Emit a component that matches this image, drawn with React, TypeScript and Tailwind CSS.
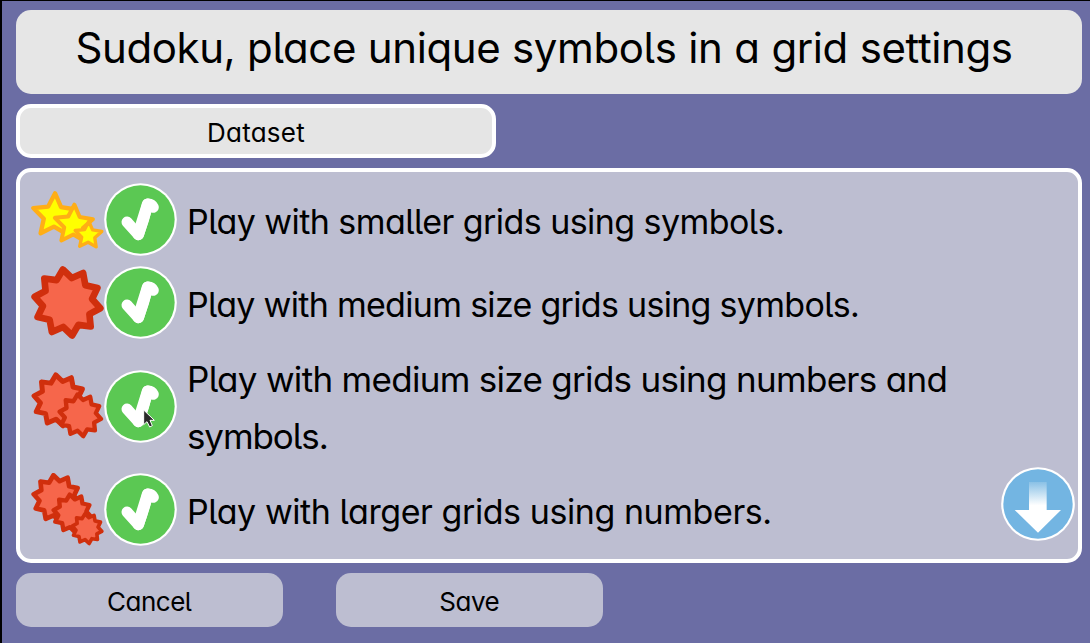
import React from "react";

function starPoints(cx: number, cy: number, outer: number, inner: number, tips: number, rotation: number) {
  const points: string[] = [];
  for (let i = 0; i < tips * 2; i++) {
    const r = i % 2 === 0 ? outer : inner;
    const a = ((rotation - 90 + (i * 180) / tips) * Math.PI) / 180;
    points.push(`${(cx + r * Math.cos(a)).toFixed(1)},${(cy + r * Math.sin(a)).toFixed(1)}`);
  }
  return points.join(" ");
}

type Shape = { cx: number; cy: number; r: number; stroke: number };

function Stars({ shapes }: { shapes: Shape[] }) {
  return (
    <svg viewBox="33 20 219 219" className="size-[73px] shrink-0">
      {shapes.map((s, i) => (
        <polygon key={i} points={starPoints(s.cx, s.cy, s.r, s.r * 0.49, 5, 2)} fill="#ffff00" stroke="#ffae16" strokeWidth={s.stroke} strokeLinejoin="round" />
      ))}
    </svg>
  );
}

function Bursts({ shapes }: { shapes: Shape[] }) {
  return (
    <svg viewBox="33 18 219 219" className="size-[73px] shrink-0">
      {shapes.map((s, i) => (
        <polygon key={i} points={starPoints(s.cx, s.cy, s.r, s.r * 0.745, 10, -8)} fill="#f6664b" stroke="#d02f0d" strokeWidth={s.stroke} strokeLinejoin="round" />
      ))}
    </svg>
  );
}

function Check() {
  return (
    <svg viewBox="0 0 219 219" className="size-[73px] shrink-0">
      <circle cx="109.5" cy="109.5" r="109" fill="#fff" />
      <circle cx="109.5" cy="109.5" r="102.5" fill="#5bc853" />
      <path d="M69 117 L103 155 Q121 108 131 63 Q143 62 148 73" fill="none" stroke="#fff" strokeWidth="33" strokeLinecap="round" strokeLinejoin="round" />
      <path d="M103 154 L131 64" fill="none" stroke="#fff" strokeWidth="35" strokeLinecap="round" />
    </svg>
  );
}

function Row({ icon, children }: { icon: React.ReactNode; children: React.ReactNode }) {
  return (
    <div className="flex items-center">
      {icon}
      <Check />
      <div className="mt-[1.5px] -mb-[1.5px] ml-[10px] leading-[57px] whitespace-nowrap">{children}</div>
    </div>
  );
}

export default function App() {
  return (
    <div className="h-[643px] w-[1090px] overflow-hidden border-t border-l-2 border-black bg-[#6b6da4] pt-[9px] pr-2 pl-[14px] font-['Inter','Noto_Sans',sans-serif] text-black [font-feature-settings:'cv05','cv11']">
      <header className="flex h-[84px] items-center justify-center rounded-[15px] bg-[#e6e6e6] pr-[10px] pb-[9px]">
        <h1 className="text-[42px] tracking-[-0.4px] [word-spacing:0.4px] whitespace-nowrap">Sudoku, place unique symbols in a grid settings</h1>
      </header>
      <div className="mt-[10px] flex h-[54px] w-[480px] items-center justify-center rounded-[15px] border-4 border-white bg-[#e5e5e5] pt-[2px] text-[26px] tracking-[0.25px]">
        Dataset
      </div>
      <main className="relative mt-[10px] h-[395px] rounded-[15px] border-4 border-white bg-[#bdbed1] pt-[11px] pl-[11px] text-[34px]">
        <div className="flex flex-col gap-[10px]">
          <Row icon={<Stars shapes={[{ cx: 103, cy: 118, r: 67, stroke: 13 }, { cx: 161, cy: 145, r: 60, stroke: 12 }, { cx: 205, cy: 177, r: 42, stroke: 10 }]} />}>
            <p className="tracking-[-0.56px]">Play with smaller grids using symbols.</p>
          </Row>
          <Row icon={<Bursts shapes={[{ cx: 142.5, cy: 127.5, r: 100, stroke: 20 }]} />}>
            <p className="tracking-[-0.7px]">Play with medium size grids using symbols.</p>
          </Row>
          <Row icon={<Bursts shapes={[{ cx: 118, cy: 109, r: 77, stroke: 15 }, { cx: 181, cy: 154, r: 63, stroke: 13 }]} />}>
            <p className="text-[35px] tracking-[-0.7px]">Play with medium size grids using numbers and</p>
            <p className="text-[35px] tracking-[-1.1px]">symbols.</p>
          </Row>
          <Row icon={<Bursts shapes={[{ cx: 110, cy: 94, r: 70, stroke: 14 }, { cx: 157, cy: 139, r: 57, stroke: 13 }, { cx: 201, cy: 185, r: 45, stroke: 11 }]} />}>
            <p className="tracking-[-0.43px]">Play with larger grids using numbers.</p>
          </Row>
        </div>
        <svg viewBox="0 0 222 222" className="absolute top-[295px] left-[981px] size-[74px]">
          <defs>
            <linearGradient id="arrow" x1="0" y1="45" x2="0" y2="115" gradientUnits="userSpaceOnUse">
              <stop offset="0" stopColor="#8ac1e6" />
              <stop offset="1" stopColor="#fff" />
            </linearGradient>
          </defs>
          <circle cx="111" cy="111" r="110.5" fill="#fff" />
          <circle cx="111" cy="111" r="104" fill="#73b5e2" />
          <path d="M84 45H137V129H180L111 197L41 129H84Z" fill="url(#arrow)" />
        </svg>
        <svg viewBox="0 0 36 57" className="absolute top-[237px] left-[123px] h-[19px] w-[12px]">
          <path d="M2 3V47L12 38L20 54L28 50L21 34H34Z" fill="#292929" stroke="#fff" strokeWidth="3" strokeLinejoin="round" />
        </svg>
      </main>
      <footer className="mt-[10px] flex gap-[53.5px] text-[26px] tracking-[-0.5px]">
        <button className="h-[54px] w-[266.5px] rounded-[15px] bg-[#bdbed1] pt-[2px]">Cancel</button>
        <button className="h-[54px] w-[266.5px] rounded-[15px] bg-[#bdbed1] pt-[2px]">Save</button>
      </footer>
    </div>
  );
}
